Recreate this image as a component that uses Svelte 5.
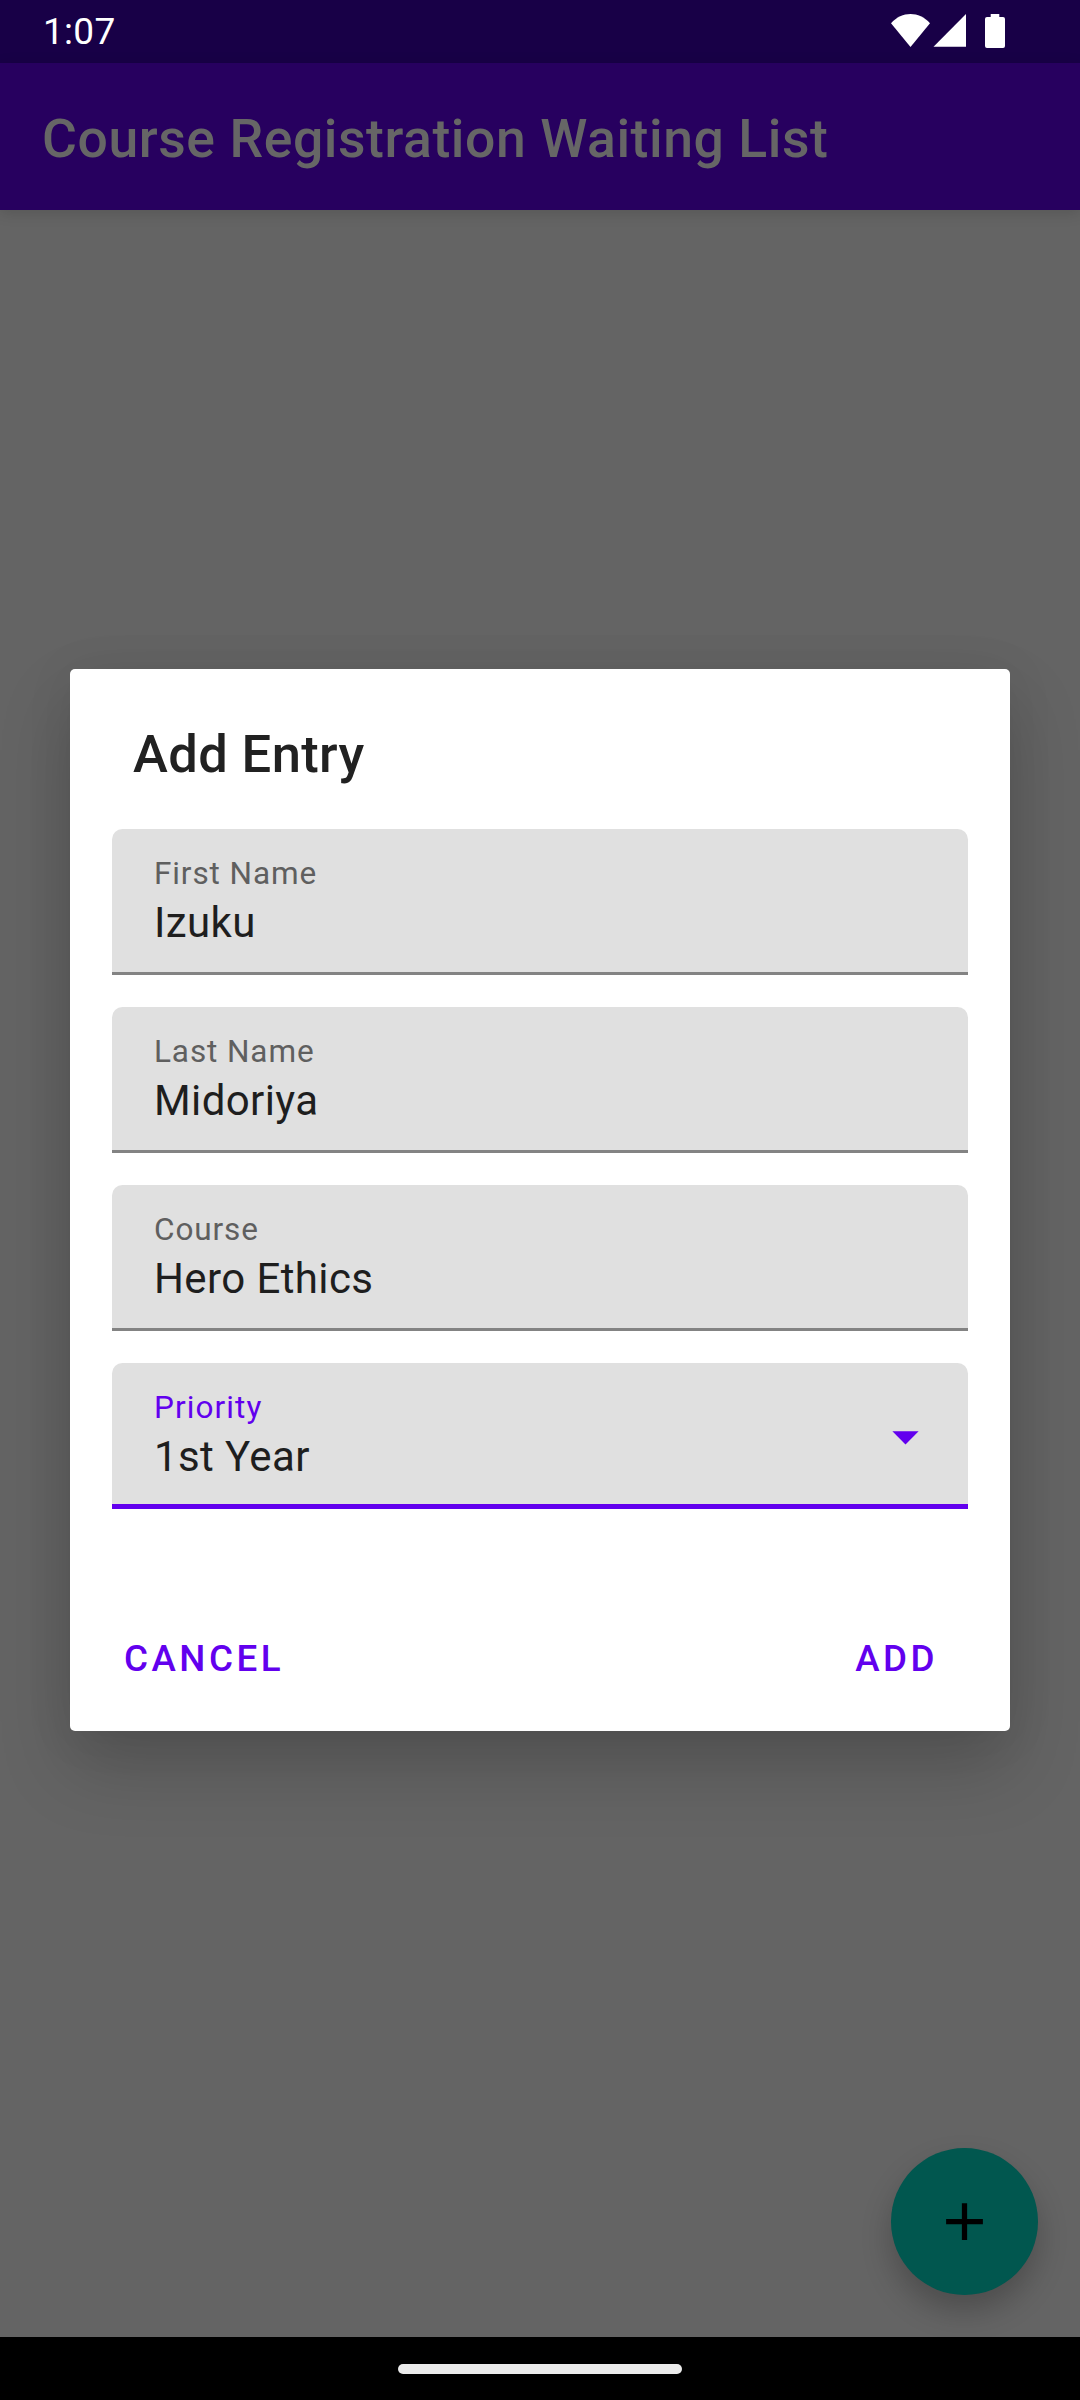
<script>
  const fields = [
    { label: 'First Name', value: 'Izuku' },
    { label: 'Last Name', value: 'Midoriya' },
    { label: 'Course', value: 'Hero Ethics' },
    { label: 'Priority', value: '1st Year', active: true }
  ];
</script>

<div class="screen">
  <header class="status">
    <span class="clock">1:07</span>
    <svg class="indicators" width="116" height="36" viewBox="0 0 116 36" fill="#fff">
      <path d="M1 9.2C12 -3 29 -3 40 9.200L20.500 33Z" />
      <path d="M43.500 32.700L76 0V32.700Z" />
      <path d="M100.700 0h8.600v3h3.700a2 2 0 0 1 2 2v27a2 2 0 0 1 -2 2h-16a2 2 0 0 1 -2 -2v-27a2 2 0 0 1 2 -2h3.700z" />
    </svg>
  </header>
  <div class="appbar"><h1>Course Registration Waiting List</h1></div>

  <main>
    <section class="dialog">
      <h2>Add Entry</h2>
      <div class="fields">
        {#each fields as f}
          <div class="field" class:active={f.active}>
            <div class="texts">
              <span class="label">{f.label}</span>
              <span class="value">{f.value}</span>
            </div>
            {#if f.active}
              <svg class="arrow" viewBox="0 0 24 24"><path d="M7 10l5 5 5-5z" fill="#6200ee" /></svg>
            {/if}
          </div>
        {/each}
      </div>
      <div class="actions">
        <button>CANCEL</button>
        <button>ADD</button>
      </div>
    </section>
    <button class="fab" aria-label="Add">
      <svg viewBox="0 0 24 24"><path d="M19 13h-6v6h-2v-6H5v-2h6V5h2v6h6v2z" /></svg>
    </button>
  </main>

  <footer><div class="pill"></div></footer>
</div>

<style>
  :global(body) { margin: 0; background: #646464; }
  * { box-sizing: border-box; }
  .screen {
    width: 1080px;
    height: 2400px;
    display: flex;
    flex-direction: column;
    overflow: hidden;
    background: #646464;
    font-family: Roboto, sans-serif;
  }
  .status {
    height: 63px;
    flex: none;
    display: flex;
    justify-content: space-between;
    padding: 0 74px 0 43px;
    background: #180047;
  }
  .clock { color: #fff; font-size: 37px; line-height: 63px; letter-spacing: 0.3px; }
  .indicators { margin-top: 14px; }
  .appbar {
    height: 147px;
    flex: none;
    display: flex;
    padding: 44px 0 0 42px;
    background: #27005f;
    box-shadow: 0 3px 14px rgba(0, 0, 0, 0.14);
  }
  h1, h2 { margin: 0; font-size: 52.5px; font-weight: 500; letter-spacing: 0.39px; white-space: nowrap; }
  h1 { color: #666; line-height: 63px; font-size: 53.5px; letter-spacing: 0.57px; }
  main {
    flex: 1;
    display: flex;
    flex-direction: column;
    padding: 459px 70px 0;
    overflow: hidden;
  }
  .dialog {
    height: 1062px;
    flex: none;
    display: flex;
    flex-direction: column;
    background: #fff;
    border-radius: 5px;
    box-shadow: 0 36px 72px rgba(0, 0, 0, 0.18), 0 4px 50px rgba(0, 0, 0, 0.07);
  }
  h2 { height: 160px; padding: 54px 63px 0; color: #212121; line-height: 62px; }
  .fields { display: flex; flex-direction: column; gap: 32px; padding: 0 42px; }
  .field {
    height: 146px;
    display: flex;
    justify-content: space-between;
    background: #e0e0e0;
    border-bottom: 3px solid #838383;
    border-radius: 10.5px 10.5px 0 0;
    padding-left: 42px;
  }
  .field.active { border-bottom: 5px solid #6200ee; }
  .texts { display: flex; flex-direction: column; padding-top: 25px; }
  .label { font-size: 31.5px; line-height: 40px; letter-spacing: 0.9px; color: #5f5f5f; }
  .active .label { color: #6200ee; letter-spacing: 1.1px; }
  .value { font-size: 42px; line-height: 58px; letter-spacing: 0.4px; color: #1e1e1e; }
  .arrow { width: 63px; height: 63px; margin: 42px 31px 0 0; }
  .actions { display: flex; justify-content: space-between; padding: 103px 72px 0 54px; }
  button { border: 0; padding: 0; background: none; font-family: inherit; }
  .actions button { font-size: 36.75px; font-weight: 500; line-height: 94px; letter-spacing: 3.5px; color: #6200ee; }
  .fab {
    width: 147px;
    height: 147px;
    flex: none;
    align-self: flex-end;
    display: flex;
    align-items: center;
    justify-content: center;
    margin: 417px -28px 0 0;
    border-radius: 50%;
    background: #01574f;
    box-shadow: 0 16px 30px rgba(0, 0, 0, 0.23);
  }
  .fab svg { width: 63px; height: 63px; }
  footer { height: 63px; flex: none; display: flex; justify-content: center; padding-top: 27px; background: #000; }
  .pill { width: 284px; height: 10px; border-radius: 5px; background: #ebebeb; }
</style>
